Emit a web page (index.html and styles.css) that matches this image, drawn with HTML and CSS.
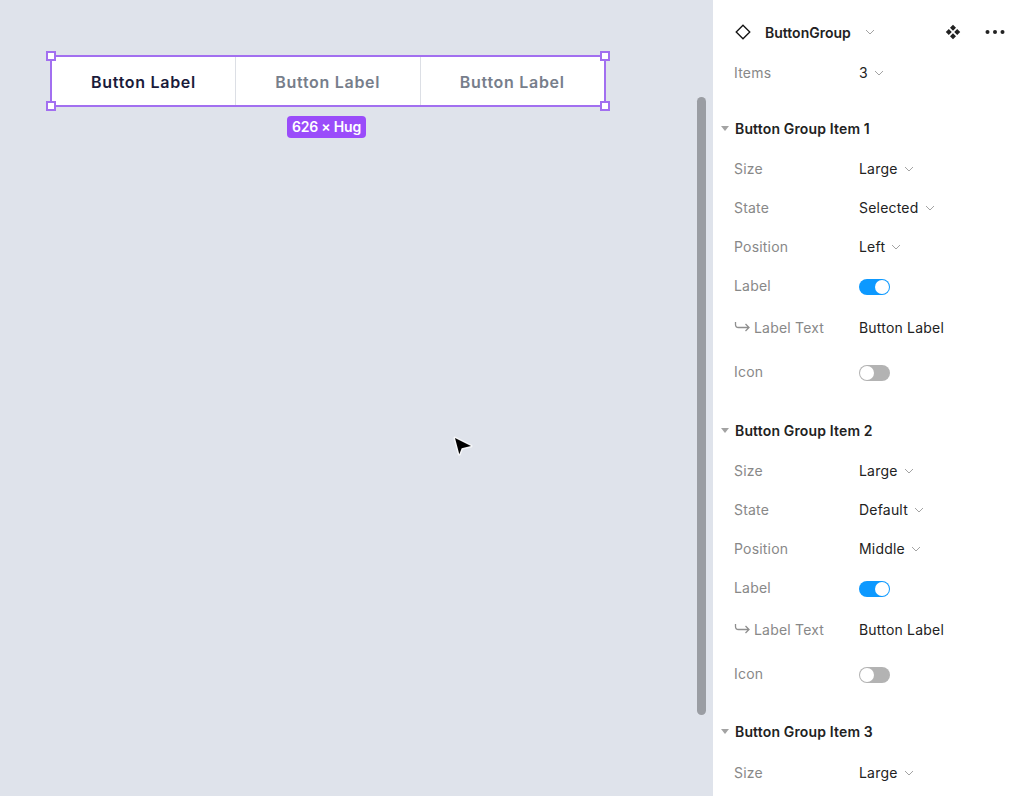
FILE: index.html
```html
<!DOCTYPE html>
<html lang="en">
<head>
<meta charset="utf-8">
<title>ButtonGroup</title>
<link rel="stylesheet" href="styles.css">
</head>
<body>
<main class="canvas">
  <div class="selection">
    <div class="btn-group">
      <div class="btn btn-selected">Button Label</div>
      <div class="btn">Button Label</div>
      <div class="btn">Button Label</div>
    </div>
    <span class="handle h-tl"></span>
    <span class="handle h-tr"></span>
    <span class="handle h-bl"></span>
    <span class="handle h-br"></span>
    <div class="badge">626 × Hug</div>
  </div>
  <div class="scrollbar"></div>
  <svg class="cursor" width="26" height="26" viewBox="0 0 26 26">
    <path class="cursor-halo" d="M5 5 L21 13 L11.700 15.300 L9.300 21.300 Z"/>
    <path class="cursor-arrow" d="M5 5 L21 13 L11.700 15.300 L9.300 21.300 Z"/>
  </svg>
</main>

<aside class="panel">
  <header class="panel-head">
    <svg class="icon-diamond" width="18" height="18" viewBox="0 0 18 18"><path d="M9 2.200 L15.800 9 L9 15.800 L2.200 9 Z"/></svg>
    <span class="panel-title">ButtonGroup</span>
    <svg class="chev" width="10" height="6" viewBox="0 0 10 6"><path d="M1 1 L5 5 L9 1"/></svg>
    <span class="spacer"></span>
    <svg class="icon-component" width="16" height="16" viewBox="0 0 16 16"><path d="M8 .8 L11 3.800 L8 6.800 L5 3.800 Z M3.800 5 L6.800 8 L3.800 11 L.8 8 Z M12.200 5 L15.200 8 L12.200 11 L9.200 8 Z M8 9.200 L11 12.200 L8 15.200 L5 12.200 Z"/></svg>
    <svg class="icon-more" width="22" height="6" viewBox="0 0 22 6"><circle cx="3.500" cy="3" r="2"/><circle cx="11" cy="3" r="2"/><circle cx="18.500" cy="3" r="2"/></svg>
  </header>
  <div class="row row-items">
    <span class="row-label">Items</span>
    <span class="row-value">3 <svg class="chev" width="10" height="6" viewBox="0 0 10 6"><path d="M1 1 L5 5 L9 1"/></svg></span>
  </div>

  <section class="section">
    <h2 class="section-title"><span class="caret"></span>Button Group Item 1</h2>
    <div class="row"><span class="row-label">Size</span><span class="row-value">Large <svg class="chev" width="10" height="6" viewBox="0 0 10 6"><path d="M1 1 L5 5 L9 1"/></svg></span></div>
    <div class="row"><span class="row-label">State</span><span class="row-value">Selected <svg class="chev" width="10" height="6" viewBox="0 0 10 6"><path d="M1 1 L5 5 L9 1"/></svg></span></div>
    <div class="row"><span class="row-label">Position</span><span class="row-value">Left <svg class="chev" width="10" height="6" viewBox="0 0 10 6"><path d="M1 1 L5 5 L9 1"/></svg></span></div>
    <div class="row row-toggle"><span class="row-label">Label</span><span class="toggle toggle-on"></span></div>
    <div class="row row-text"><span class="row-label"><svg class="icon-nest" width="16" height="12" viewBox="0 0 16 12"><path d="M1.500 1 V3.500 Q1.500 6.500 4.500 6.500 H15 M11.500 3 L15 6.500 L11.500 10"/></svg>Label Text</span><span class="row-value">Button Label</span></div>
    <div class="row row-icon"><span class="row-label">Icon</span><span class="toggle"></span></div>
  </section>

  <section class="section">
    <h2 class="section-title"><span class="caret"></span>Button Group Item 2</h2>
    <div class="row"><span class="row-label">Size</span><span class="row-value">Large <svg class="chev" width="10" height="6" viewBox="0 0 10 6"><path d="M1 1 L5 5 L9 1"/></svg></span></div>
    <div class="row"><span class="row-label">State</span><span class="row-value">Default <svg class="chev" width="10" height="6" viewBox="0 0 10 6"><path d="M1 1 L5 5 L9 1"/></svg></span></div>
    <div class="row"><span class="row-label">Position</span><span class="row-value">Middle <svg class="chev" width="10" height="6" viewBox="0 0 10 6"><path d="M1 1 L5 5 L9 1"/></svg></span></div>
    <div class="row row-toggle"><span class="row-label">Label</span><span class="toggle toggle-on"></span></div>
    <div class="row row-text"><span class="row-label"><svg class="icon-nest" width="16" height="12" viewBox="0 0 16 12"><path d="M1.500 1 V3.500 Q1.500 6.500 4.500 6.500 H15 M11.500 3 L15 6.500 L11.500 10"/></svg>Label Text</span><span class="row-value">Button Label</span></div>
    <div class="row row-icon"><span class="row-label">Icon</span><span class="toggle"></span></div>
  </section>

  <section class="section section-last">
    <h2 class="section-title"><span class="caret"></span>Button Group Item 3</h2>
    <div class="row"><span class="row-label">Size</span><span class="row-value">Large <svg class="chev" width="10" height="6" viewBox="0 0 10 6"><path d="M1 1 L5 5 L9 1"/></svg></span></div>
  </section>
</aside>
</body>
</html>
```
FILE: styles.css
```css
* { box-sizing: border-box; }
html, body { height: 100%; }
body {
  margin: 0;
  height: 796px;
  display: flex;
  overflow: hidden;
  font-family: Inter, "Liberation Sans", sans-serif;
  background: #fff;
}
.canvas {
  position: relative;
  flex: 0 0 713px;
  background: #dfe3eb;
  padding: 55px 0 0 50px;
}
.selection {
  position: relative;
  width: 556px;
}
.btn-group {
  display: flex;
  height: 52px;
  background: #fff;
  border: 2px solid #a26ff0;
}
.btn {
  flex: 1 1 0;
  display: flex;
  align-items: center;
  justify-content: center;
  padding-top: 1px;
  font-size: 16px;
  font-weight: 600;
  letter-spacing: 0.7px;
  color: #777e8b;
  border-left: 1px solid #dcdfe5;
}
.btn-selected {
  flex: 0 0 183px;
  color: #1a1b3a;
  border-left: 0;
}
.handle {
  position: absolute;
  width: 10px;
  height: 10px;
  background: #fff;
  border: 2px solid #a26ff0;
}
.h-tl { left: -4px; top: -4px; }
.h-tr { right: -4px; top: -4px; }
.h-bl { left: -4px; top: 46px; }
.h-br { right: -4px; top: 46px; }
.badge {
  width: 79px;
  height: 22px;
  margin: 9px 0 0 237px;
  border-radius: 4px;
  background: #9a4cfa;
  color: #fff;
  font-size: 14px;
  font-weight: 600;
  letter-spacing: -0.2px;
  line-height: 22px;
  text-align: center;
  white-space: nowrap;
}
.scrollbar {
  position: absolute;
  left: 697px;
  top: 97px;
  width: 9px;
  height: 618px;
  border-radius: 5px;
  background: #9a9da3;
}
.cursor {
  position: absolute;
  left: 450px;
  top: 433px;
}
.cursor-halo { fill: #fff; stroke: #fff; stroke-width: 3; stroke-linejoin: round; opacity: .7; }
.cursor-arrow { fill: #000; }

.panel {
  flex: 0 0 311px;
  padding-top: 20px;
  font-size: 14px;
  letter-spacing: 0.2px;
  color: #222;
  overflow: hidden;
}
.panel-head {
  display: flex;
  align-items: center;
  height: 24px;
  padding: 0 18px 0 21px;
}
.icon-diamond { fill: none; stroke: #111; stroke-width: 1.300; flex: none; }
.panel-title {
  margin-left: 13px;
  font-size: 14px;
  font-weight: 600;
  letter-spacing: 0;
  color: #222;
}
.panel-head .chev { margin-left: 14px; }
.spacer { flex: 1; }
.icon-component { fill: #222; margin-right: 23px; }
.icon-more { fill: #222; }
.chev {
  fill: none;
  stroke: #a3a3a3;
  stroke-width: 1;
  margin-left: 2px;
  vertical-align: 2px;
}
.row {
  display: flex;
  align-items: center;
  height: 24px;
  margin-top: 15px;
  padding-left: 21px;
}
.row-items { margin-top: 16px; }
.row-label {
  flex: 0 0 125px;
  display: flex;
  align-items: center;
  color: #888;
}
.row-value { color: #222; white-space: nowrap; }
.section { margin-top: 32px; }
.section + .section { margin-top: 35px; }
.section + .section-last { margin-top: 34px; }
.section-title {
  display: flex;
  align-items: center;
  height: 24px;
  margin: 0 0 -3px;
  padding-left: 8px;
  font-size: 14px;
  font-weight: 600;
  letter-spacing: 0.15px;
  color: #222;
}
.caret {
  width: 0;
  height: 0;
  margin-right: 6px;
  border-left: 4px solid transparent;
  border-right: 4px solid transparent;
  border-top: 5px solid #a3a3a3;
}
.section-title + .row { margin-top: 19px; }
.section-last .section-title + .row { margin-top: 20px; }
.row-toggle { margin-top: 15px; }
.row-text { margin-top: 18px; }
.row-icon { margin-top: 20px; }
.toggle {
  position: relative;
  display: block;
  width: 31px;
  height: 16px;
  margin-top: 4px;
  border-radius: 8px;
  background: #b3b3b3;
}
.toggle::after {
  content: "";
  position: absolute;
  left: 1px;
  top: 1px;
  width: 14px;
  height: 14px;
  border-radius: 50%;
  background: #fff;
}
.toggle-on { background: #0d99ff; }
.toggle-on::after { left: 16px; }
.icon-nest {
  flex: none;
  margin-right: 4px;
  fill: none;
  stroke: #8f8f8f;
  stroke-width: 1.300;
}
```
